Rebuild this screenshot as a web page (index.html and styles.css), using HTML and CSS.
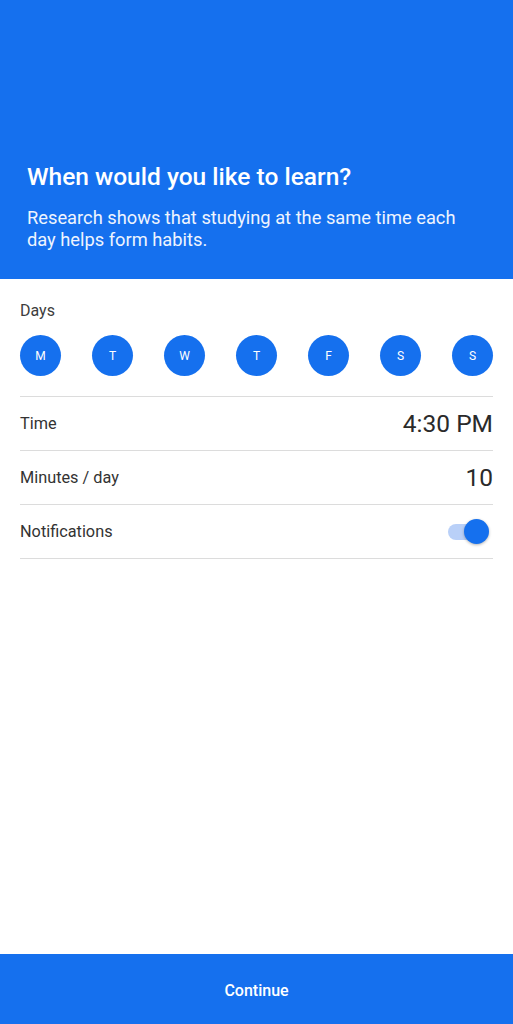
FILE: index.html
```html
<!DOCTYPE html>
<html lang="en">
<head>
<meta charset="utf-8">
<title>Schedule</title>
<link rel="stylesheet" href="styles.css">
</head>
<body>
<div class="screen">
  <header class="hero">
    <h1 class="hero-title">When would you like to learn?</h1>
    <p class="hero-text">Research shows that studying at the same time each day helps form habits.</p>
  </header>
  <main class="content">
    <div class="days-label">Days</div>
    <div class="days">
      <span class="day">M</span>
      <span class="day">T</span>
      <span class="day">W</span>
      <span class="day">T</span>
      <span class="day">F</span>
      <span class="day">S</span>
      <span class="day">S</span>
    </div>
    <div class="rows">
      <div class="row"><span class="row-label">Time</span><span class="row-value">4:30 PM</span></div>
      <div class="row"><span class="row-label">Minutes / day</span><span class="row-value">10</span></div>
      <div class="row"><span class="row-label">Notifications</span><span class="switch"><span class="switch-track"></span><span class="switch-thumb"></span></span></div>
    </div>
  </main>
  <button class="continue">Continue</button>
</div>
</body>
</html>
```
FILE: styles.css
```css
* { box-sizing: border-box; }
html, body { margin: 0; padding: 0; }
body {
  font-family: Roboto, "Noto Sans", "Liberation Sans", sans-serif;
  background: #fff;
}
.screen {
  width: 513px;
  height: 1024px;
  display: flex;
  flex-direction: column;
  overflow: hidden;
}
.hero {
  background: #1570ee;
  color: #fff;
  height: 279px;
  padding: 0 27px 28px;
  display: flex;
  flex-direction: column;
  justify-content: flex-end;
  flex-shrink: 0;
}
.hero-title {
  margin: 0;
  font-size: 24.5px;
  line-height: 28px;
  font-weight: 500;
}
.hero-text {
  margin: 16px 0 0;
  font-size: 18.3px;
  line-height: 22px;
  font-weight: 400;
  color: #eef4fe;
}
.content {
  flex: 1;
  padding: 22px 20px 0;
}
.days-label {
  font-size: 16px;
  line-height: 20px;
  color: #3d3d3d;
}
.days {
  margin-top: 14px;
  display: flex;
  justify-content: space-between;
  padding-bottom: 20px;
  border-bottom: 1px solid #dcdcdc;
}
.day {
  width: 41px;
  height: 41px;
  border-radius: 50%;
  background: #1570ee;
  color: #fff;
  font-size: 12px;
  display: flex;
  align-items: center;
  justify-content: center;
}
.row {
  height: 54px;
  border-bottom: 1px solid #dcdcdc;
  display: flex;
  align-items: center;
  justify-content: space-between;
}
.row-label {
  font-size: 16.3px;
  color: #333;
}
.row-value {
  font-size: 24.5px;
  color: #2a2a2a;
}
.switch {
  position: relative;
  width: 41px;
  height: 26px;
  margin-right: 4px;
}
.switch-track {
  position: absolute;
  left: 0;
  top: 5px;
  width: 35px;
  height: 16px;
  border-radius: 8px;
  background: #b9d0f8;
}
.switch-thumb {
  position: absolute;
  right: 0;
  top: 0;
  width: 25px;
  height: 25px;
  border-radius: 50%;
  background: #1570ee;
  box-shadow: 0 1px 3px rgba(0,0,0,0.3);
}
.continue {
  flex-shrink: 0;
  height: 70px;
  border: none;
  padding: 2px 0 0;
  background: #1570ee;
  color: #fff;
  font-family: Roboto, "Noto Sans", "Liberation Sans", sans-serif;
  font-size: 16px;
  font-weight: 500;
  width: 100%;
}
```
